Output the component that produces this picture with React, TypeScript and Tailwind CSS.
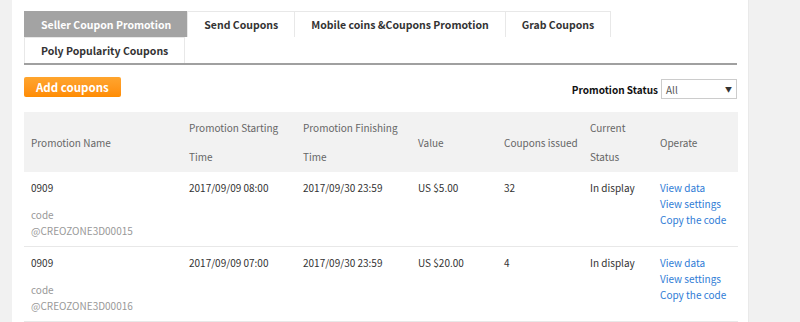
import React from "react";

// ========================================================================================================

const tabs = [
  "Seller Coupon Promotion",
  "Send Coupons",
  "Mobile coins &Coupons Promotion",
  "Grab Coupons",
  "Poly Popularity Coupons",
];

const rows = [
  {
    name: "0909",
    code: "@CREOZONE3D00015",
    start: "2017/09/09 08:00",
    end: "2017/09/30 23:59",
    value: "US $5.00",
    issued: "32",
    status: "In display",
  },
  {
    name: "0909",
    code: "@CREOZONE3D00016",
    start: "2017/09/09 07:00",
    end: "2017/09/30 23:59",
    value: "US $20.00",
    issued: "4",
    status: "In display",
  },
];

export default function App() {
  return (
    <div className="flex min-h-[322px] bg-[#f1f1f1] font-['Noto_Sans_CJK_SC',sans-serif] text-[10px] text-[#333]">
      <div className="ml-3 w-[737px] border-r border-[#e9e9e9] bg-white pt-[11px] pl-3 pr-[11px]">
        {/* Tabs */}
        <ul className="flex flex-wrap border-b-2 border-[#a0a0a0]">
          {tabs.map((tab, i) => (
            <li
              key={tab}
              className={
                i === 0
                  ? "-mr-px flex h-[26px] items-center border border-b-0 border-[#a3a3a3] bg-[#a3a3a3] px-4 text-[10.5px] font-bold text-white"
                  : "-mr-px flex h-[26px] items-center border border-b-0 border-[#e8e8e8] px-4 text-[10.5px] font-bold text-[#333]"
              }
            >
              {tab}
            </li>
          ))}
        </ul>

        {/* Toolbar */}
        <div className="mt-3 flex items-start justify-between">
          <button className="h-5 rounded-[2px] bg-gradient-to-b from-[#ffa52e] to-[#ff8c00] px-3 text-[11.5px] font-bold leading-5 text-white">
            Add coupons
          </button>
          <div className="mt-[2px] flex items-center gap-[3px]">
            <span className="text-[10px] font-bold text-[#111]">Promotion Status</span>
            <div className="flex h-5 w-[76px] items-center justify-between border border-[#ccc] px-[4px] text-[10px] text-[#555]">
              <span>All</span>
              <span className="text-[7px] text-[#333]">▼</span>
            </div>
          </div>
        </div>

        {/* Table */}
        <table className="mt-[13px] w-full table-fixed border-collapse">
          <colgroup>
            <col className="w-[158px]" />
            <col className="w-[114px]" />
            <col className="w-[115px]" />
            <col className="w-[86px]" />
            <col className="w-[86px]" />
            <col className="w-[70px]" />
            <col className="w-[85px]" />
          </colgroup>
          <thead>
            <tr className="h-[60px] bg-[#f2f2f2] text-left align-middle leading-[29px] text-[#666]">
              <th className="pl-[7px] font-normal">Promotion Name</th>
              <th className="pl-[7px] font-normal">
                Promotion Starting
                <br />
                Time
              </th>
              <th className="pl-[7px] font-normal">
                Promotion Finishing
                <br />
                Time
              </th>
              <th className="pl-[7px] font-normal">Value</th>
              <th className="pl-[7px] font-normal whitespace-nowrap">Coupons issued</th>
              <th className="pl-[7px] font-normal">
                Current
                <br />
                Status
              </th>
              <th className="pl-[7px] font-normal">Operate</th>
            </tr>
          </thead>
          <tbody>
            {rows.map((row) => (
              <tr key={row.code} className="border-b border-[#e8e8e8] align-top leading-4">
                <td className="pt-2 pb-[7px] pl-[7px]">
                  <div className="mb-[11px]">{row.name}</div>
                  <div className="text-[#999]">code</div>
                  <div className="text-[#999]">{row.code}</div>
                </td>
                <td className="pt-2 pl-[7px]">{row.start}</td>
                <td className="pt-2 pl-[7px]">{row.end}</td>
                <td className="pt-2 pl-[7px]">{row.value}</td>
                <td className="pt-2 pl-[7px]">{row.issued}</td>
                <td className="pt-2 pl-[7px]">{row.status}</td>
                <td className="pt-2 pl-[7px] text-[#2f7cd6]">
                  <div>View data</div>
                  <div>View settings</div>
                  <div>Copy the code</div>
                </td>
              </tr>
            ))}
          </tbody>
        </table>
      </div>
    </div>
  );
}
